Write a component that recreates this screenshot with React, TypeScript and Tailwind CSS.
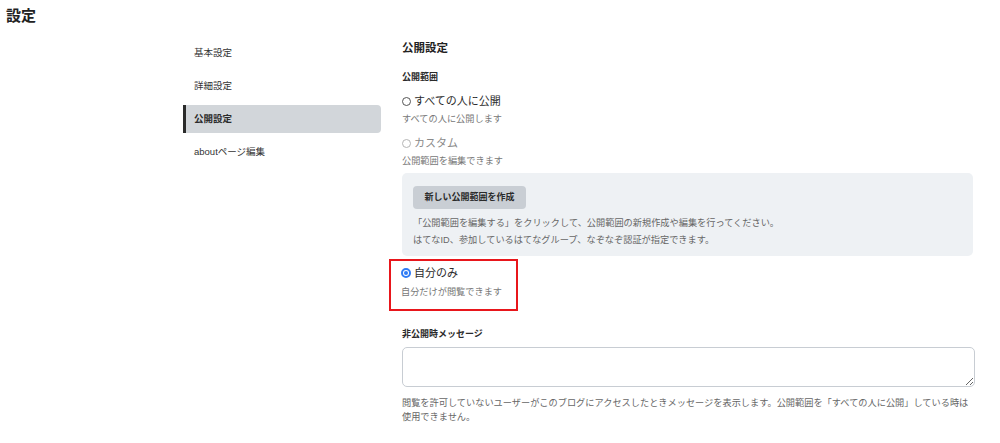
import React, { useState } from 'react'

const menuItems = ['基本設定', '詳細設定', '公開設定', 'aboutページ編集']

const Radio = ({ checked, disabled }: { checked?: boolean; disabled?: boolean }) => {
  if (checked) {
    return (
      <span className="flex h-[10px] w-[10px] items-center justify-center rounded-full border-[2px] border-[#2f7bf5] bg-white">
        <span className="h-[4px] w-[4px] rounded-full bg-[#2f7bf5]" />
      </span>
    )
  }
  return (
    <span
      className={
        disabled
          ? 'h-[9px] w-[9px] rounded-full border border-[#b5b5b5] bg-white'
          : 'h-[9px] w-[9px] rounded-full border border-[#555] bg-white'
      }
    />
  )
}

const App = () => {
  const [active] = useState('公開設定')
  const [message, setMessage] = useState('')

  return (
    <div className="min-h-[443px] bg-white font-['Liberation_Sans','Noto_Sans_CJK_JP',sans-serif] text-[#2b2b2b]">
      <h1 className="pl-[6px] pt-[6px] text-[15px] font-bold leading-[20px] text-[#222]">設定</h1>

      <div className="ml-[183px] mt-[13px] flex gap-[21px]">
        {/* sidebar */}
        <nav className="flex w-[198px] flex-col gap-[5px]">
          {menuItems.map((item) =>
            item === active ? (
              <div
                key={item}
                className="flex h-[28px] items-center rounded-r-[4px] border-l-[3px] border-[#2b2b2b] bg-[#d2d6da] pl-[8px] text-[9.5px] font-bold"
              >
                {item}
              </div>
            ) : (
              <div key={item} className="flex h-[28px] items-center pl-[11px] text-[9.5px] text-[#333]">
                {item}
              </div>
            )
          )}
        </nav>

        {/* main */}
        <div className="flex w-[573px] flex-col pt-[1px]">
          <h2 className="text-[11.5px] font-bold leading-[16px] text-[#222]">公開設定</h2>

          <h3 className="mt-[14px] text-[9px] font-bold leading-[14px]">公開範囲</h3>

          <label className="mt-[9px] flex h-[16px] items-center gap-[3px] text-[11px]">
            <Radio />
            すべての人に公開
          </label>
          <p className="mt-[3px] text-[9.2px] leading-[14px] text-[#777]">すべての人に公開します</p>

          <label className="mt-[9px] flex h-[16px] items-center gap-[3px] text-[11px] text-[#8a8a8a]">
            <Radio disabled />
            カスタム
          </label>
          <p className="mt-[3px] text-[9.2px] leading-[14px] text-[#777]">公開範囲を編集できます</p>

          <div className="mt-[5px] w-[571px] rounded-[5px] bg-[#eef1f4] px-[11px] pb-[7px] pt-[10px]">
            <button
              type="button"
              className="h-[23px] w-[113px] rounded-[4px] bg-[#c9ced4] text-[9px] font-bold text-[#2b2b2b]"
            >
              新しい公開範囲を作成
            </button>
            <p className="mt-[6px] text-[9.2px] leading-[17px] text-[#666]">
              「公開範囲を編集する」をクリックして、公開範囲の新規作成や編集を行ってください。
              <br />
              はてなID、参加しているはてなグループ、なぞなぞ認証が指定できます。
            </p>
          </div>

          <div className="ml-[-13px] mt-[3px] w-[129px] border-2 border-[#e8161b] pb-[10px] pl-[10px] pt-[4px]">
            <label className="flex h-[16px] items-center gap-[3px] text-[11px]">
              <Radio checked />
              自分のみ
            </label>
            <p className="mt-[4px] text-[9.2px] leading-[14px] text-[#777]">自分だけが閲覧できます</p>
          </div>

          <h3 className="mt-[16px] text-[9px] font-bold leading-[14px]">非公開時メッセージ</h3>

          <textarea
            className="mt-[6px] h-[40px] w-[573px] rounded-[5px] border border-[#c8cdd3] bg-white px-[6px] py-[4px] text-[10px] outline-none"
            value={message}
            onChange={(e) => setMessage(e.target.value)}
          />

          <p className="mt-[9px] text-[9.2px] leading-[14px] text-[#666]">
            閲覧を許可していないユーザーがこのブログにアクセスしたときメッセージを表示します。公開範囲を「すべての人に公開」している時は使用できません。
          </p>
        </div>
      </div>
    </div>
  )
}

export default App
